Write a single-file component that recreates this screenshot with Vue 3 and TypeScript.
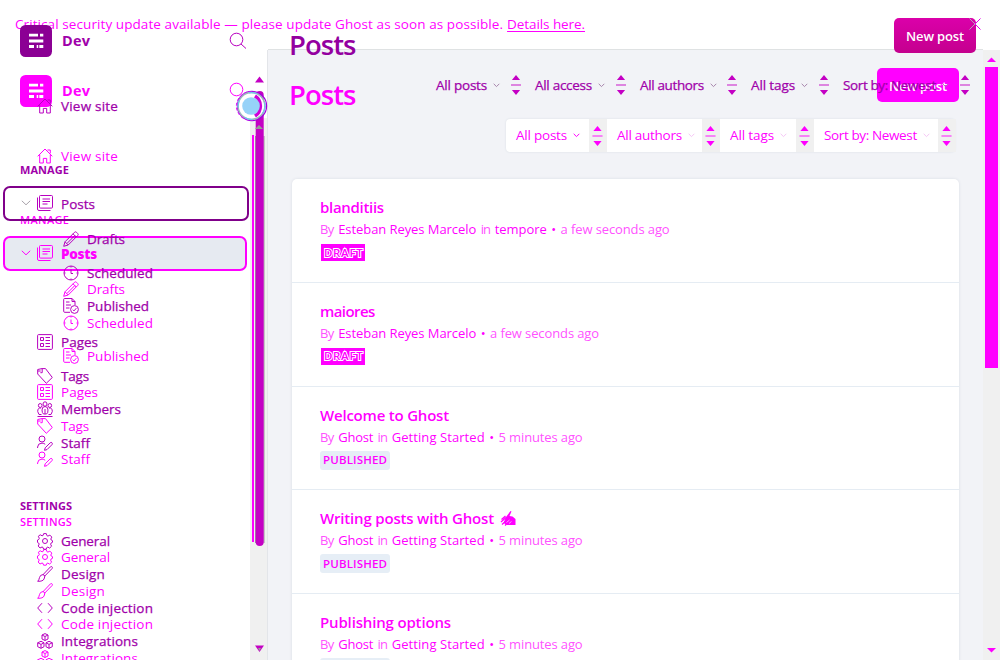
<script setup lang="ts">
import type { Directive } from 'vue'

interface NavItem { label: string; icon: string; w: number; sub?: boolean; active?: boolean }
interface Filter { label: string; w: number; cell: number }
interface Meta { text: string; w: number; strong?: boolean }
interface Post { title: string; w: number; status: string; hand?: boolean; meta: Meta[] }
interface Layer { name: string; nav: NavItem[]; filters: Filter[] }

// Spreads the glyphs of a label over the given width.
const vFit: Directive<HTMLElement, number> = {
  mounted(el, binding) {
    const chars = (el.textContent ?? '').trim().length
    const natural = el.getBoundingClientRect().width
    if (chars > 1) el.style.letterSpacing = `${(binding.value - natural) / (chars - 0.5)}px`
  },
}

const icons: Record<string, string> = {
  home: 'M.7 8.3 8 1l7.3 7.3M2.7 6.5V15h3.6v-4.6h3.4V15h3.6V6.5M10.5 2h2.8v3.4',
  posts: 'M3.5.5h11q1 0 1 1v10.6q0 1-1 1h-11q-1 0-1-1V1.500q0-1 1-1ZM.5 2.500V14q0 1.500 1.500 1.500h11.500M5.500 4h7.500M5.500 6.500h7.500M5.500 9h5',
  pencil: 'M.7 15.3 2 10.8 11.5 1.3q1-1 2 0l1.2 1.2q1 1 0 2L5.2 14ZM2 10.8 5.2 14M10 2.8 13.2 6M4 12.4l8-8',
  clock: 'M15 8A7 7 0 1 1 1 8a7 7 0 0 1 14 0ZM8 4.5V8.5h2M8 1v1.5M8 13.5V15M1 8h1.5M13.5 8H15',
  published: 'M7 14.3H1.7q-1 0-1-1v-12q0-.8 1-.8H9l3 3V7M9 .5v3h3M3 4h3.5M3 7h5M3 10h3.5M15.4 11.5a3.9 3.9 0 1 1-7.8 0 3.9 3.9 0 0 1 7.8 0ZM9.8 11.7l1.2 1.2 2.3-2.7',
  pages: 'M1.6.6h12.8q1 0 1 1v12.8q0 1-1 1H1.6q-1 0-1-1V1.6q0-1 1-1ZM3.5 3.500h3v3h-3ZM3.500 9.500h3v3h-3ZM8.500 3.500h4.500M8.500 6.500h4.500M8.500 9.500h4.500M8.500 12.500h4.500',
  tag: 'M.7 6V1.5L5 .6h3.5L15.3 9.5 9.3 15.3.7 6ZM5.2.7v4H3.4M.7 3h3',
  members: 'M10 3a2 2.2 0 1 1-4 0 2 2.2 0 0 1 4 0ZM5 4.5a1.8 2 0 1 1-3.6 0 1.8 2 0 0 1 3.6 0ZM14.6 4.5a1.8 2 0 1 1-3.6 0 1.8 2 0 0 1 3.6 0ZM5 9Q5 5.500 8 5.500T11 9t-1.500 4h-3Q5 12 5 9ZM8 8v5M4 7Q.7 6.5.7 10.500L2 13.500h2.5M12 7q3.3-.5 3.3 3.500L14 13.500h-2.5M.5 15.5h15',
  staff: 'M8 4a3 3 0 1 1-6 0 3 3 0 0 1 6 0ZM.6 13V12Q.8 8.2 5 8.1q2 0 3.2 1.2M7.5 15.3l.7-2.5 5-5q1-.8 1.8 0t0 1.8l-5 5Z',
  gear: 'M10.5 8a2.5 2.5 0 1 1-5 0 2.5 2.5 0 0 1 5 0ZM6.7.6h2.6l.6 2 1 .5 2-1 1.9 2-1 1.9.4 1 1.3.7v1.6l-1.5.8-.4 1.1 1 2-2 1.9-1.8-1-1 .4-.6 1.7H6.6l-.6-1.8-1-.4-2 1-1.8-2 1-1.9-.5-1L.5 9.4V7l1.3-.6.5-1.1-1-2L3.2 1.8l1.9 1 1-.4Z',
  brush: 'M6.2 8.5 13.5.8q1-.6 1.6.1t0 1.6L7.8 10ZM6.2 8.5Q3 8.8 2.5 11.5T.7 15.3Q6 15.5 7 13t.8-3L6.2 8.5',
  code: 'M5 3.2.7 8 5 12.8M11 3.2 15.3 8 11 12.8',
  integrations: 'M8 .6l3 1.4v4L8 7.5 5 6V2ZM5 2l3 1.5L11 2M8 3.5v4M4 8.3l3 1.5v3.9l-3 1.6-3.3-1.6V9.8ZM.7 9.8 4 11.4l3-1.6M4 11.4v3.9M12 8.3l3.3 1.5v3.9L12 15.3l-3-1.6V9.8ZM9 9.8l3 1.6 3.3-1.6M12 11.4v3.9',
}

const manage: NavItem[] = [
  { label: 'Posts', icon: 'posts', w: 34, active: true },
  { label: 'Drafts', icon: 'pencil', w: 38, sub: true },
  { label: 'Scheduled', icon: 'clock', w: 66, sub: true },
  { label: 'Published', icon: 'published', w: 62, sub: true },
  { label: 'Pages', icon: 'pages', w: 37 },
  { label: 'Tags', icon: 'tag', w: 28 },
  { label: 'Members', icon: 'members', w: 60 },
  { label: 'Staff', icon: 'staff', w: 29 },
]
const settings: NavItem[] = [
  { label: 'General', icon: 'gear', w: 49 },
  { label: 'Design', icon: 'brush', w: 44 },
  { label: 'Code injection', icon: 'code', w: 92 },
  { label: 'Integrations', icon: 'integrations', w: 77 },
]

const layers: Layer[] = [
  {
    name: 'bright',
    nav: manage.filter((i) => i.label !== 'Members'),
    filters: [
      { label: 'All posts', w: 51, cell: 101 },
      { label: 'All authors', w: 65, cell: 113 },
      { label: 'All tags', w: 44, cell: 94 },
      { label: 'Sort by: Newest', w: 93, cell: 142 },
    ],
  },
  {
    name: 'dark',
    nav: manage,
    filters: [
      { label: 'All posts', w: 51, cell: 99 },
      { label: 'All access', w: 57, cell: 105 },
      { label: 'All authors', w: 64, cell: 111 },
      { label: 'All tags', w: 44, cell: 92 },
      { label: 'Sort by: Newest', w: 93, cell: 141 },
    ],
  },
]

const started: Meta[] = [
  { text: 'By', w: 14 }, { text: 'Ghost', w: 35, strong: true }, { text: 'in', w: 10 },
  { text: 'Getting Started', w: 93, strong: true }, { text: '•', w: 5, strong: true }, { text: '5 minutes ago', w: 84 },
]
const esteban: Meta[] = [{ text: 'By', w: 14 }, { text: 'Esteban Reyes Marcelo', w: 138, strong: true }]
const seconds: Meta[] = [{ text: '•', w: 5, strong: true }, { text: 'a few seconds ago', w: 109 }]
const posts: Post[] = [
  { title: 'blanditiis', w: 64, status: 'DRAFT', meta: [...esteban, { text: 'in', w: 10 }, { text: 'tempore', w: 52, strong: true }, ...seconds] },
  { title: 'maiores', w: 55, status: 'DRAFT', meta: [...esteban, ...seconds] },
  { title: 'Welcome to Ghost', w: 129, status: 'PUBLISHED', meta: started },
  { title: 'Writing posts with Ghost', w: 174, status: 'PUBLISHED', hand: true, meta: started },
  { title: 'Publishing options', w: 131, status: 'PUBLISHED', meta: started },
]
</script>

<template>
  <div class="page">
    <div class="banner">
      <span v-fit="488">Critical security update available — please update Ghost as soon as possible.</span>
      <a v-fit="78">Details here.</a>
    </div>

    <div v-for="layer in layers" :key="layer.name" class="layer" :class="layer.name">
      <aside class="sidebar">
        <nav class="nav">
          <header class="brand">
            <svg class="logo" viewBox="0 0 32 32">
              <rect width="32" height="32" rx="5.5" fill="currentColor" />
              <path d="M9 10.2h9M20 10.2h3.300M9 16h14.300M9 21.500h5M16.700 21.500h1.500M19.300 21.500h4" stroke="#fff" stroke-width="2.8" />
            </svg>
            <b class="site" v-fit="28">Dev</b>
            <svg class="search" viewBox="0 0 18 18"><circle cx="7.5" cy="7.5" r="6.3" /><path d="m12 12 5 4.5" /></svg>
          </header>
          <div class="row">
            <svg class="icon" viewBox="0 0 16 16"><path :d="icons.home" /></svg><span v-fit="57">View site</span>
          </div>
          <h4><span v-fit="49">MANAGE</span></h4>
          <div v-for="item in layer.nav" :key="item.label" class="row" :class="{ sub: item.sub, active: item.active }">
            <svg v-if="item.active" class="caret" viewBox="0 0 10 6"><path d="m.8.8 4.2 4L9.2.8" /></svg>
            <svg class="icon" viewBox="0 0 16 16"><path :d="icons[item.icon]" /></svg>
            <span v-fit="layer.name === 'bright' && item.active ? 36 : item.w">{{ item.label }}</span>
          </div>
          <h4 class="second"><span v-fit="52">SETTINGS</span></h4>
          <div v-for="item in settings" :key="item.label" class="row">
            <svg class="icon" viewBox="0 0 16 16"><path :d="icons[item.icon]" /></svg><span v-fit="item.w">{{ item.label }}</span>
          </div>
        </nav>
        <div v-if="layer.name === 'bright'" class="side-track"></div>
      </aside>

      <main class="main">
        <header class="head">
          <h1><span v-fit="67">Posts</span></h1>
          <button class="new"><span v-fit="58">New post</span></button>
        </header>
        <div class="filters">
          <div v-for="f in layer.filters" :key="f.label" class="filter" :style="{ width: f.cell + 'px' }">
            <span v-fit="f.w">{{ f.label }}</span>
            <svg class="chev" viewBox="0 0 7 5"><path d="m.7.8 2.8 2.8L6.3.8" /></svg>
            <span class="spin">
              <svg viewBox="0 0 11 24"><path d="M1 6.5 5.5 1 10 6.5ZM1 17.5h9L5.5 23Z" /><path d="M0 11.5h11v1H0Z" /></svg>
            </span>
          </div>
        </div>
        <section v-if="layer.name === 'bright'" class="list">
          <article v-for="p in posts" :key="p.title" class="post">
            <h3>
              <span v-fit="p.w">{{ p.title }}</span>
              <svg v-if="p.hand" class="hand" viewBox="0 0 15 15">
                <path d="M5 6 9.500 0l1 .5L8.500 5l3 .5L14.500 8v6H6L2.500 12Z" fill="currentColor" />
                <path d="m.5 8.500 4-3.500M0 11l5-4.500M1 13.500 6 9M4 14.500l3-3" stroke="currentColor" stroke-width="1.3" />
                <path d="m5.500 11.500 3-2.500M8 12.500l2.500-2" stroke="#fff" stroke-width=".6" />
              </svg>
            </h3>
            <p><span v-for="(m, i) in p.meta" :key="i" v-fit="m.w" :class="{ strong: m.strong }">{{ m.text }}</span></p>
            <span class="badge" :class="p.status.toLowerCase()"><span v-fit="p.status === 'DRAFT' ? 39 : 64">{{ p.status }}</span></span>
          </article>
        </section>
      </main>
      <div v-if="layer.name === 'bright'" class="track">
        <svg viewBox="0 0 9 5"><path d="M0 5 4.5.5 9 5Z" /></svg>
        <div class="thumb"></div>
        <svg viewBox="0 0 9 5"><path d="m0 0 4.5 4.5L9 0Z" /></svg>
      </div>
    </div>

    <svg class="close" viewBox="0 0 12 12"><path d="M.5.5 6 6 .5 11.5" stroke="#b8a0bc" /><path d="M11.5.5 6 6l5.5 5.5" stroke="#e400ec" /></svg>

    <!-- sidebar scroll thumb and pointer -->
    <svg class="pointer" viewBox="0 0 40 590">
      <path d="M20 12.500 24.500 6.500 29 12.500Z" fill="#c400c4" />
      <path d="M18 65V472" stroke="#f0f" stroke-width="2" />
      <path d="M20.500 66V473M29 66V473" stroke="#999" />
      <rect x="20.700" y="21" width="8" height="455" rx="4" fill="#c400c4" />
      <path d="m20 59 4-4 4 4Z" fill="#999" />
      <path d="M20 575.5h9L24.5 582Z" fill="#c400c4" /><path d="m23 578 3 0-1.5 3Z" fill="#999" />
      <circle cx="16" cy="36" r="13.5" fill="#fff" />
      <path d="M20 26a12 12 0 0 1 0 20" fill="none" stroke="#d000d8" stroke-width="3.5" />
      <circle cx="17" cy="36" r="14.6" fill="none" stroke="#a000e0" stroke-width="1.2" />
      <circle cx="15.7" cy="36" r="14.3" fill="none" stroke="#e000ff" stroke-dasharray="3 2" />
      <circle cx="16.5" cy="36" r="13.4" fill="none" stroke="#9bb8bb" stroke-width="1.5" />
      <circle cx="16.5" cy="36" r="13.4" fill="none" stroke="#72c5ee" stroke-width="1.2" stroke-dasharray="8 12" />
      <circle cx="16" cy="36" r="8.8" fill="#96d2f8" />
    </svg>
  </div>
</template>

<style>
body { margin: 0; overflow: hidden; }
</style>

<style scoped>
.page { position: relative; width: 1000px; height: 660px; overflow: hidden; background: #fff; color: #f0f; font: 13.5px/18px "Open Sans", "Noto Sans", sans-serif; }
span, a, b { white-space: nowrap; }
svg { flex: none; fill: none; stroke: currentColor; stroke-width: 1; overflow: visible; }
h1, h3, h4, p { margin: 0; }
.banner { display: flex; gap: 4px; height: 50px; box-sizing: border-box; padding: 15px 15px 0; }
.banner a { text-decoration: underline; text-underline-offset: 2px; height: 18px; }
.layer { position: absolute; inset: 0; display: flex; }
.bright { top: 50px; --icon: #f0f; }
.dark { color: #a000aa; --icon: #b800c0; }
.dark .row span, .dark .filter > span { -webkit-text-stroke: .25px currentColor; }

.sidebar { display: flex; width: 267px; flex: none; overflow: hidden; }
.nav { width: 250px; flex: none; }
.bright .sidebar { border-right: 1px solid #e3e5e9; }
.side-track { margin-top: 68px; width: 17px; background: #f0f0f0; }
.brand { display: flex; align-items: center; height: 32px; padding: 25px 4px 32.25px 20px; }
.logo { width: 32px; height: 32px; stroke: none; }
.dark .logo { color: #8b0094; }
.site { margin-left: 10px; font-size: 14.5px; }
.search { width: 18px; height: 18px; margin: 0 0 0 auto; color: var(--icon); transform: translate(1px, 0); }
.bright .search path { display: none; }
.row { display: flex; align-items: center; box-sizing: border-box; height: 33.5px; padding-left: 37px; gap: 8px; }
.row.sub { padding-left: 63px; }
.row.active { height: 35px; width: 246px; margin: -1px 0 1.75px 3px; padding-left: 16px; border: 2px solid #80008a; border-radius: 7px; gap: 7px; }
.bright .row.active { width: 244px; border-color: #f0f; background: #e6eaf1; font-weight: 800; }
.caret { width: 10px; height: 6px; margin-right: -1px; color: #a9a3ab; }
.bright .caret { color: #f0f; }
.row.active .icon + span { margin: 1px 0 0 1px; }
.sub + .row:not(.sub) { margin-top: 2.25px; }
.icon { width: 16px; height: 16px; color: var(--icon); }
h4 { font-size: 11px; line-height: 16px; font-weight: 600; padding: 39px 0 9px 20px; }
h4.second { padding: 38.500px 0 10px 20px; }
.dark h4 { font-weight: 700; }

.main { flex: 1; min-width: 0; padding-left: 24px; }
.bright .main { background: #f2f3f7; box-shadow: 0 -1px #dfe2e3; }
.head { display: flex; justify-content: space-between; align-items: flex-start; height: 36px; padding: 17px 24px 0 0; }
h1 { font-size: 27.5px; line-height: 36px; font-weight: 600; margin: 10px 0 0 -3px; }
.dark h1 { color: #9400a0; margin-left: -2px; }
.new { box-sizing: border-box; width: 82px; height: 35px; margin-top: 1px; padding: 2px 0 1px; border: 0; border-radius: 5px; background: #f0f; color: #fff; font: 600 13px/18px "Open Sans", sans-serif; }
.bright .new { height: 34px; }
.dark .new { background: linear-gradient(#db00aa, #c4008e); }
.filters { display: flex; }
.bright .filters { width: 449px; height: 33px; margin: 16px 0 0 214px; background: #fff; border-radius: 4px; box-shadow: 0 0 2px #d5d9df; }
.dark .filters { margin: 15.500px 0 0 145px; height: 33px; }
.filter { display: flex; align-items: center; box-sizing: border-box; flex: none; }
.bright .filter { padding-left: 10px; }
.bright .filter > span:first-child { margin-top: -1px; }
.chev { width: 7px; height: 5px; margin-left: 6px; }
.dark .chev { color: #a785ac; }
.bright .filter:not(:first-child) .chev { color: #f6c7f6; }
.spin { display: flex; align-items: center; justify-content: center; align-self: stretch; width: 18px; margin-left: auto; }
.bright .spin { background: #f0f0f0; }
.dark .spin { width: 11px; margin-right: 14px; }
.spin svg { width: 11px; height: 24px; fill: #c400c4; stroke: none; }
.bright .spin svg { fill: #f0f; height: 22px; margin-right: 2px; }
.dark .spin svg { width: 10px; }

.list { width: 667px; height: 500px; margin-top: 27px; background: #fff; border-radius: 5px 5px 0 0; box-shadow: 0 0 3px #d8dce3; }
.post { box-sizing: border-box; height: 103.8px; padding: 18px 28px 0; border-bottom: 1px solid #e5ecf3; }
h3 { display: flex; align-items: center; gap: 7px; font-size: 15px; line-height: 20px; font-weight: 600; }
.hand { width: 15px; height: 15px; stroke: none; }
p { display: flex; gap: 4.5px; margin-top: 3px; font-size: 13px; line-height: 18px; color: #ff52ff; }
.strong { color: #f0f; font-weight: 500; }
.badge { display: flex; align-items: center; box-sizing: border-box; width: 70px; height: 19px; margin-top: 5px; padding-left: 3px; border-radius: 3px; background: #e6eef6; font-size: 11.5px; font-weight: 600; }
.badge.draft { width: 44px; height: 17px; margin: 6px 0 0 1px; border-radius: 0; background: #f0f; }
.draft span { -webkit-text-stroke: 2px #fff; paint-order: stroke fill; }

.track { display: flex; flex-direction: column; align-items: center; width: 17px; flex: none; background: #f0f0f0; box-sizing: border-box; height: 610px; padding: 7px 0; }
.track svg { width: 9px; height: 5px; fill: #f0f; stroke: none; }
.thumb { width: 13px; height: 301px; margin: 5px 0 auto; background: #f0f; }
.close { position: absolute; left: 969px; top: 18px; width: 12px; height: 12px; }
.pointer { position: absolute; left: 235px; top: 70px; width: 40px; height: 590px; stroke: none; }
</style>
